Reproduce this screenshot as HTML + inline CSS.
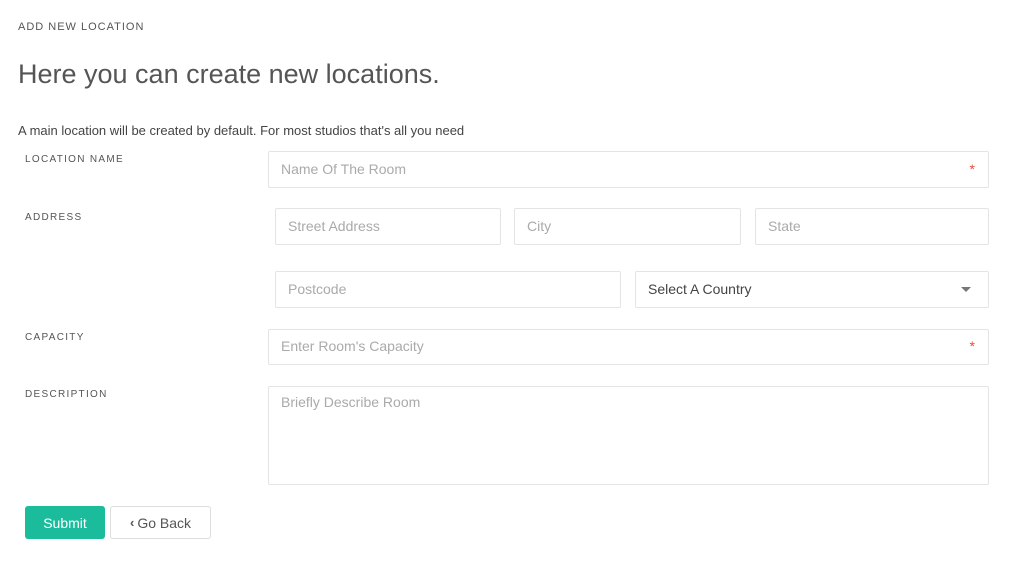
<!DOCTYPE html>
<html><head><style>
body{margin:0;width:1024px;height:562px;background:#fff;font-family:"Liberation Sans",sans-serif;position:relative;overflow:hidden}
.a{position:absolute}
.lab{position:absolute;left:25px;font-size:10px;letter-spacing:1.3px;color:#555}
.in{position:absolute;box-sizing:border-box;border:1px solid #e4e4e4;border-radius:2px;font-size:14px;color:#aaa;padding-left:12px;padding-bottom:2px;display:flex;align-items:center}
.star{position:absolute;right:13px;color:#e74c3c;font-size:14px}
</style></head><body>
<div class="a" style="left:18px;top:21px;font-size:11px;letter-spacing:1px;color:#555">ADD NEW LOCATION</div>
<div class="a" style="left:18px;top:59px;font-size:27px;font-weight:300;color:#555">Here you can create new locations.</div>
<div class="a" style="left:18px;top:123px;font-size:13px;color:#444">A main location will be created by default. For most studios that's all you need</div>
<div class="lab" style="top:154px">LOCATION NAME</div>
<div class="lab" style="top:212px">ADDRESS</div>
<div class="lab" style="top:332px">CAPACITY</div>
<div class="lab" style="top:389px">DESCRIPTION</div>
<div class="in" style="left:268px;top:151px;width:721px;height:37px">Name Of The Room<span class="star">*</span></div>
<div class="in" style="left:275px;top:208px;width:226px;height:37px">Street Address</div>
<div class="in" style="left:514px;top:208px;width:227px;height:37px">City</div>
<div class="in" style="left:755px;top:208px;width:234px;height:37px">State</div>
<div class="in" style="left:275px;top:271px;width:346px;height:37px">Postcode</div>
<div class="in" style="left:635px;top:271px;width:354px;height:37px;color:#444">Select A Country<span style="position:absolute;right:17px;top:15px;width:0;height:0;border-left:5px solid transparent;border-right:5px solid transparent;border-top:5px solid #777"></span></div>
<div class="in" style="left:268px;top:329px;width:721px;height:36px">Enter Room's Capacity<span class="star">*</span></div>
<div class="in" style="left:268px;top:386px;width:721px;height:99px;align-items:flex-start;padding-top:7px">Briefly Describe Room</div>
<div class="a" style="left:25px;top:506px;width:80px;height:33px;background:#1abc9c;border-radius:3px;color:#fff;font-size:14px;display:flex;align-items:center;justify-content:center">Submit</div>
<div class="a" style="left:110px;top:506px;width:101px;height:33px;box-sizing:border-box;border:1px solid #ddd;border-radius:3px;color:#555;font-size:14px;display:flex;align-items:center;justify-content:center"><b style="font-size:13px;margin-right:3px">‹</b>Go Back</div>
</body></html>
